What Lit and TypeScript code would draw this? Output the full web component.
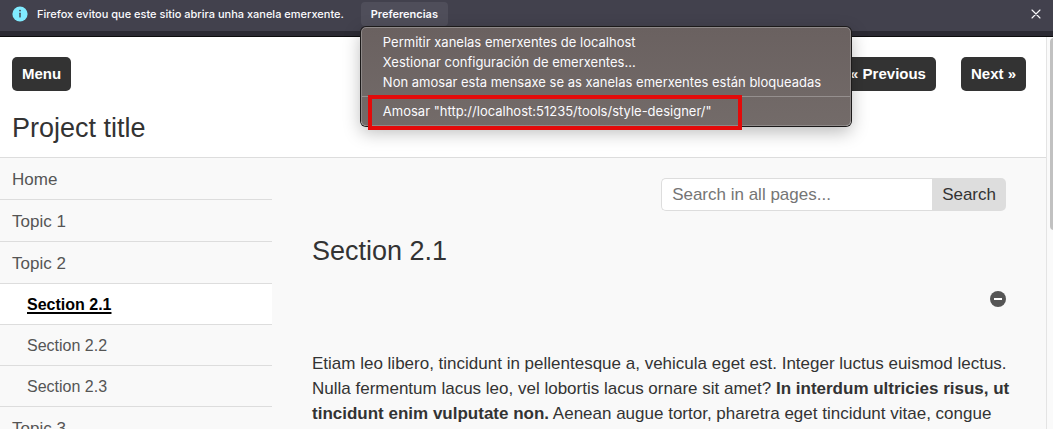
import { LitElement, html, css } from "lit";
import { customElement, state } from "lit/decorators.js";
import { classMap } from "lit/directives/class-map.js";

interface NavItem {
  label: string;
  sub?: boolean;
  active?: boolean;
}

const NAV: NavItem[] = [
  { label: "Home" },
  { label: "Topic 1" },
  { label: "Topic 2" },
  { label: "Section 2.1", sub: true, active: true },
  { label: "Section 2.2", sub: true },
  { label: "Section 2.3", sub: true },
  { label: "Topic 3" },
];

/* Browser notification strip with its preferences menu */
@customElement("popup-notice")
export class PopupNotice extends LitElement {
  static styles = css`
    :host {
      display: block;
      position: relative;
      z-index: 2;
      font-family: Inter, "Liberation Sans", sans-serif;
      color: #fbfbfe;
      background: #2b2a33;
      border-bottom: 1px solid #0c0c0d;
      padding-bottom: 5px;
    }
    .bar {
      display: flex;
      align-items: center;
      height: 31px;
      box-sizing: border-box;
      padding: 0 12px 3px;
      background: #42414d;
      font-size: 11px;
      font-weight: 500;
    }
    .info {
      width: 16px;
      height: 16px;
      margin-right: 9px;
    }
    .text {
      white-space: nowrap;
    }
    .anchor {
      position: relative;
      margin-left: 17px;
    }
    button {
      font: inherit;
      color: inherit;
      border: 0;
      margin: 0;
      background: none;
    }
    .prefs {
      display: block;
      width: 87px;
      height: 24px;
      padding: 0;
      border-radius: 4px;
      background: #4f4e5a;
      font-weight: 600;
    }
    .close {
      display: flex;
      margin-left: auto;
      padding: 4px 0;
    }
    .menu {
      position: absolute;
      top: 25px;
      left: 0;
      width: 490px;
      box-sizing: border-box;
      padding: 4px 0;
      border: 1px solid #8e8988;
      border-radius: 5px;
      background: linear-gradient(#6a6160, #736b69);
      box-shadow: 0 0 0 1px #1c1a1a, 0 6px 18px rgba(0, 0, 0, 0.28);
    }
    .item {
      display: block;
      width: 100%;
      padding: 0 21px;
      font-size: 13px;
      font-weight: 400;
      line-height: 20px;
      text-align: left;
      white-space: nowrap;
    }
    .sep {
      height: 1px;
      margin: 4px 0;
      border: 0;
      background: #958f8e;
    }
    .mark {
      position: absolute;
      top: 93px;
      left: 7px;
      width: 374px;
      height: 35px;
      box-sizing: border-box;
      border: 4px solid #e30a0a;
      pointer-events: none;
    }
  `;

  render() {
    return html`
      <div class="bar" role="alert">
        <svg class="info" viewBox="0 0 16 16" aria-hidden="true">
          <circle cx="8" cy="8" r="7.6" fill="#80ebff" />
          <circle cx="8" cy="4.6" r="0.9" fill="#42414d" />
          <rect x="7.3" y="6.6" width="1.4" height="5" rx="0.7" fill="#42414d" />
        </svg>
        <span class="text">Firefox evitou que este sitio abrira unha xanela emerxente.</span>
        <div class="anchor">
          <button class="prefs" aria-haspopup="menu" aria-expanded="true">Preferencias</button>
          <div class="menu" role="menu">
            <button class="item" role="menuitem">Permitir xanelas emerxentes de localhost</button>
            <button class="item" role="menuitem">Xestionar configuración de emerxentes...</button>
            <button class="item" role="menuitem">Non amosar esta mensaxe se as xanelas emerxentes están bloqueadas</button>
            <hr class="sep" />
            <button class="item" role="menuitem">Amosar "http://localhost:51235/tools/style-designer/"</button>
          </div>
          <div class="mark"></div>
        </div>
        <button class="close" aria-label="Pechar">
          <svg width="10" height="10" viewBox="0 0 10 10" aria-hidden="true">
            <path d="M1 1l8 8M9 1L1 9" stroke="#fbfbfe" stroke-width="1.1" stroke-linecap="round" />
          </svg>
        </button>
      </div>
    `;
  }
}

@customElement("app-root")
export class AppRoot extends LitElement {
  static styles = css`
    :host {
      display: flex;
      flex-direction: column;
      height: 100vh;
      overflow: hidden;
      font-family: "Liberation Sans", Arial, sans-serif;
      font-size: 17px;
      color: #333;
      background: #f9f9f9;
    }
    .view {
      flex: 1;
      min-height: 0;
      display: flex;
    }
    .page {
      flex: 1;
      min-width: 0;
      overflow: hidden;
    }
    .track {
      width: 3px;
      padding: 1px 0 0 3px;
      border-left: 1px solid #e4e4e4;
      background: #fafafa;
      overflow: hidden;
    }
    .thumb {
      width: 8px;
      height: 192px;
      border-radius: 4px;
      background: #c1c1c1;
    }
    .head {
      padding: 20px 20px 13px 12px;
      border-bottom: 1px solid #ddd;
      background: #fff;
    }
    .tools {
      display: flex;
      gap: 25px;
    }
    .btn {
      display: block;
      padding: 0 10px;
      border: 0;
      border-radius: 5px;
      font: bold 15px/34px "Liberation Sans", Arial, sans-serif;
      color: #fff;
      background: #333;
      text-decoration: none;
    }
    .prev {
      margin-left: auto;
    }
    h1,
    h2 {
      margin: 0;
      font-size: 27px;
      line-height: 32px;
      font-weight: normal;
    }
    h1 {
      margin-top: 21px;
    }
    .body {
      display: grid;
      grid-template-columns: 272px minmax(0, 1fr);
    }
    ul {
      margin: 0;
      padding: 0;
      list-style: none;
    }
    .link {
      display: block;
      padding: 2px 12px 0;
      border-bottom: 1px solid #ddd;
      line-height: 39px;
      color: #555;
      text-decoration: none;
    }
    .sub {
      padding-left: 27px;
      font-size: 16px;
      line-height: 38px;
    }
    .active {
      font-weight: bold;
      color: #000;
      background: #fff;
      text-decoration: underline;
      text-decoration-thickness: 2px;
      text-underline-offset: 2px;
    }
    main {
      padding: 20px 40px 0;
    }
    form {
      display: flex;
      justify-content: flex-end;
      height: 33px;
    }
    .query {
      width: 271px;
      box-sizing: border-box;
      padding: 0 10px;
      border: 1px solid #ddd;
      border-right: 0;
      border-radius: 5px 0 0 5px;
      font: inherit;
      color: inherit;
      background: #fff;
    }
    .query::placeholder {
      color: #757575;
      opacity: 1;
    }
    .go {
      padding: 0 10px;
      border: 0;
      border-radius: 0 5px 5px 0;
      font: inherit;
      color: inherit;
      background: #ddd;
    }
    h2 {
      margin-top: 24px;
    }
    .fold {
      display: block;
      margin: 24px 0 0 auto;
      padding: 0;
      border: 0;
      background: none;
      line-height: 0;
    }
    p {
      margin: 44px -16px 0 0;
      line-height: 25px;
    }
  `;

  @state() private open = true;

  render() {
    return html`
      <popup-notice></popup-notice>
      <div class="view">
        <div class="page">
          <header class="head">
            <div class="tools">
              <button class="btn">Menu</button>
              <a class="btn prev" href="#prev">« Previous</a>
              <a class="btn" href="#next">Next »</a>
            </div>
            <h1>Project title</h1>
          </header>
          <div class="body">
            <nav>
              <ul>
                ${NAV.map(
                  (n) => html`<li>
                    <a class=${classMap({ link: true, sub: !!n.sub, active: !!n.active })} href="#">${n.label}</a>
                  </li>`
                )}
              </ul>
            </nav>
            <main>
              <form role="search" @submit=${(e: Event) => e.preventDefault()}>
                <input class="query" type="text" aria-label="Search in all pages..." placeholder="Search in all pages..." />
                <button class="go">Search</button>
              </form>
              <h2>Section 2.1</h2>
              <button
                class="fold"
                aria-label="Toggle content"
                aria-expanded=${this.open}
                @click=${() => (this.open = !this.open)}
              >
                <svg width="16" height="16" viewBox="0 0 16 16" aria-hidden="true">
                  <circle cx="8" cy="8" r="8" fill="#555" />
                  <rect x="4" y="7" width="8" height="2" fill="#fff" />
                </svg>
              </button>
              <p ?hidden=${!this.open}>
                Etiam leo libero, tincidunt in pellentesque a, vehicula eget est. Integer luctus euismod
                lectus. Nulla fermentum lacus leo, vel lobortis lacus ornare sit amet?
                <strong>In interdum ultricies risus, ut tincidunt enim vulputate non.</strong> Aenean augue
                tortor, pharetra eget tincidunt vitae, congue
              </p>
            </main>
          </div>
        </div>
        <div class="track"><div class="thumb"></div></div>
      </div>
    `;
  }
}
